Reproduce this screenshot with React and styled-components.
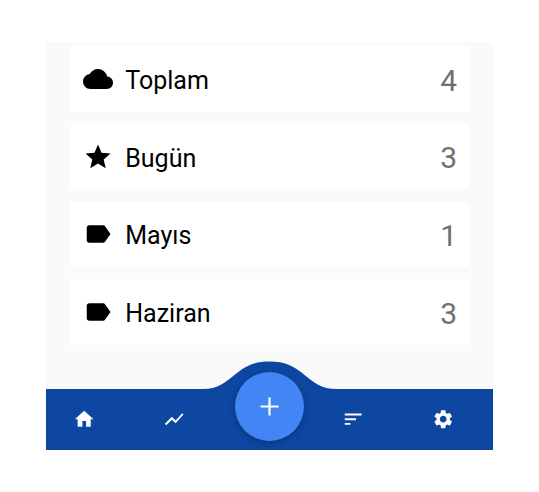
import React from "react";
import styled, { createGlobalStyle } from "styled-components";
import { MdCloud, MdStar, MdLabel, MdHome, MdShowChart, MdSort, MdSettings } from "react-icons/md";

const GlobalStyle = createGlobalStyle`
  * { box-sizing: border-box; }
  body { margin: 0; background: #fff; font-family: Roboto, sans-serif; }
`;

const Page = styled.div`
  width: 539px;
  height: 492px;
  padding: 42px 46px;
  background: #fff;
`;

const Screen = styled.main`
  display: flex;
  flex-direction: column;
  width: 447px;
  height: 408px;
  background: #fafafa;
`;

const List = styled.ul`
  flex: 1;
  display: flex;
  flex-direction: column;
  gap: 12.4px;
  margin: 0;
  padding: 4.3px 24px 0 24.4px;
  list-style: none;
`;

const Card = styled.li`
  display: flex;
  align-items: center;
  height: 65.3px;
  padding: 0 12px 0 12.2px;
  border-radius: 2px;
  background: #fff;
  color: #000;
`;

const CardIcon = styled.span`
  display: flex;
  margin-right: 12.7px;
  font-size: 30px;
`;

const Label = styled.span`
  flex: 1;
  padding-top: 4.3px;
  font-size: 25px;
  line-height: 30px;
`;

const Count = styled.span`
  padding-top: 3.2px;
  font-size: 30px;
  line-height: 36px;
  color: #707070;
`;

const Bar = styled.nav`
  position: relative;
  display: grid;
  grid-template-columns: repeat(5, 1fr);
  height: 61px;
  background: #0d47a1;
  color: #fff;
`;

const Hump = styled.svg`
  position: absolute;
  left: 153px;
  top: -28px;
  width: 141px;
  height: 29px;
  fill: #0d47a1;
`;

const Tab = styled.button`
  display: flex;
  align-items: center;
  justify-content: center;
  padding: 0 ${(p) => p.$shift || 0}px 0 0;
  border: 0;
  background: none;
  color: inherit;
  font-size: 22.4px;
`;

const AddButton = styled.button`
  position: absolute;
  left: 188.7px;
  top: -17.4px;
  display: flex;
  align-items: center;
  justify-content: center;
  width: 69.6px;
  height: 69.6px;
  padding: 0;
  border: 0;
  border-radius: 50%;
  background: #4285f4;
  box-shadow: 0 2px 7px rgba(0, 0, 0, 0.25);
`;

const rows = [
  { icon: MdCloud, label: "Toplam", count: 4 },
  { icon: MdStar, label: "Bugün", count: 3 },
  { icon: MdLabel, label: "Mayıs", count: 1 },
  { icon: MdLabel, label: "Haziran", count: 3 },
];

export default function App() {
  return (
    <Page>
      <GlobalStyle />
      <Screen>
        <List>
          {rows.map(({ icon: Icon, label, count }) => (
            <Card key={label}>
              <CardIcon><Icon /></CardIcon>
              <Label>{label}</Label>
              <Count>{count}</Count>
            </Card>
          ))}
        </List>
        <Bar>
          <Hump viewBox="0 0 141 29">
            <path d="M0 29L4 28C18 28 26 22 36 13.5C47 4.5 55 .5 70.5 .5S94 4.5 105 13.5C115 22 123 28 137 28L141 29Z" />
          </Hump>
          <Tab $shift={13} aria-label="Home"><MdHome /></Tab>
          <Tab $shift={12} aria-label="Chart"><MdShowChart /></Tab>
          <span />
          <Tab $shift={12} aria-label="Sort"><MdSort /></Tab>
          <Tab $shift={11} aria-label="Settings"><MdSettings /></Tab>
          <AddButton aria-label="Add">
            <svg width="19" height="19" viewBox="0 0 19 19" stroke="#fff" strokeWidth="2.2">
              <path d="M9.5 .5V18.5M.5 9.5H18.5" />
            </svg>
          </AddButton>
        </Bar>
      </Screen>
    </Page>
  );
}
